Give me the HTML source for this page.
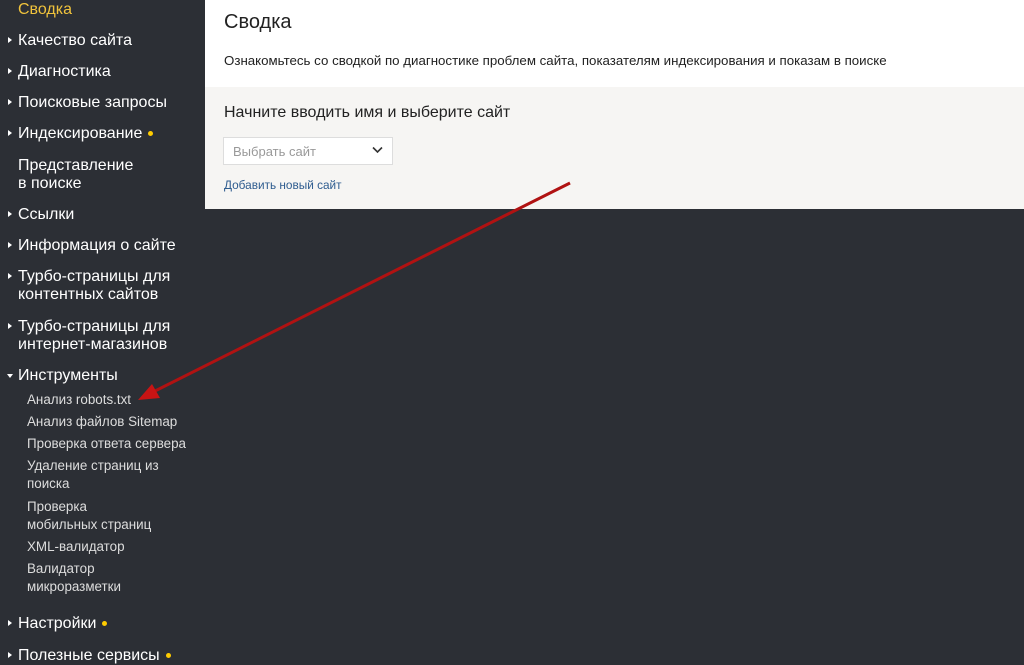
<!DOCTYPE html>
<html><head><meta charset="utf-8"><style>
body{margin:0;width:1024px;height:664px;background:#2c2f35;font-family:"Liberation Sans",Arial,sans-serif;overflow:hidden;position:relative}
.m{position:absolute;left:18px;color:#fff;font-size:16px;line-height:18px;margin-top:1px}
.m.t::before{content:"";position:absolute;left:-10px;top:5px;border-left:4px solid #fff;border-top:3.5px solid transparent;border-bottom:3.5px solid transparent}
.m.o::before{content:"";position:absolute;left:-11px;top:7px;border-top:4px solid #fff;border-left:3.5px solid transparent;border-right:3.5px solid transparent}
.d{display:inline-block;width:5px;height:5px;border-radius:50%;background:#fc0;margin-left:6px;vertical-align:middle}
.s{position:absolute;left:27px;color:#ddd;font-size:13.4px;line-height:18px}
.panel{position:absolute;left:205px;top:0;width:819px;height:209px;background:#f6f5f3}
.top{position:absolute;left:0;top:0;width:819px;height:87px;background:#fff}
</style></head><body>
<div class="m" style="top:0;color:#f0c33c">Сводка</div>
<div class="m t" style="top:31px">Качество сайта</div>
<div class="m t" style="top:62px">Диагностика</div>
<div class="m t" style="top:93px">Поисковые запросы</div>
<div class="m t" style="top:124px">Индексирование<span class="d"></span></div>
<div class="m" style="top:156px">Представление<br>в поиске</div>
<div class="m t" style="top:205px">Ссылки</div>
<div class="m t" style="top:236px">Информация о сайте</div>
<div class="m t" style="top:267px">Турбо-страницы для<br>контентных сайтов</div>
<div class="m t" style="top:317px">Турбо-страницы для<br>интернет-магазинов</div>
<div class="m o" style="top:366px">Инструменты</div>
<div class="s" style="top:391px">Анализ robots.txt</div>
<div class="s" style="top:413px">Анализ файлов Sitemap</div>
<div class="s" style="top:435px">Проверка ответа сервера</div>
<div class="s" style="top:457px">Удаление страниц из<br>поиска</div>
<div class="s" style="top:498px">Проверка<br>мобильных страниц</div>
<div class="s" style="top:538px">XML-валидатор</div>
<div class="s" style="top:560px">Валидатор<br>микроразметки</div>
<div class="m t" style="top:614px">Настройки<span class="d"></span></div>
<div class="m t" style="top:646px">Полезные сервисы<span class="d"></span></div>
<div class="panel">
<div class="top">
<div style="position:absolute;left:19px;top:11px;font-size:20px;color:#222">Сводка</div>
<div style="position:absolute;left:19px;top:53px;font-size:13.3px;color:#222">Ознакомьтесь со сводкой по диагностике проблем сайта, показателям индексирования и показам в поиске</div>
</div>
<div style="position:absolute;left:19px;top:104px;font-size:16px;color:#222">Начните вводить имя и выберите сайт</div>
<div style="position:absolute;left:18px;top:137px;width:168px;height:26px;background:#fff;border:1px solid #ddd">
<span style="position:absolute;left:9px;top:6px;font-size:13px;color:#999">Выбрать сайт</span>
<svg style="position:absolute;left:148px;top:8px" width="11" height="8"><path d="M1 1.5L5.5 6L10 1.5" stroke="#333" stroke-width="1.6" fill="none"/></svg>
</div>
<div style="position:absolute;left:19px;top:178px;font-size:11.8px;color:#2e5c8f">Добавить новый сайт</div>
</div>
<svg style="position:absolute;left:0;top:0" width="1024" height="664">
<line x1="570" y1="183" x2="155" y2="391" stroke="#b01212" stroke-width="3"/>
<polygon points="138,400 152,384 160,398" fill="#c81414"/>
</svg>
</body></html>
